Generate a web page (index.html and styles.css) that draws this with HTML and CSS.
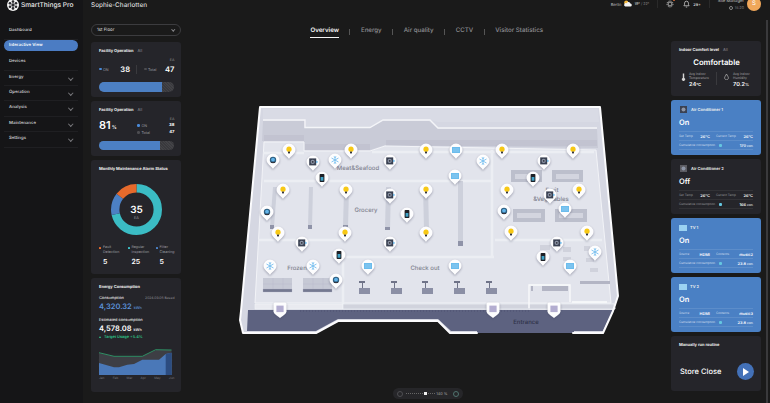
FILE: index.html
```html
<!DOCTYPE html>
<html lang="en">
<head>
<meta charset="utf-8">
<title>SmartThings Pro</title>
<link rel="stylesheet" href="styles.css">
</head>
<body>
<div class="app">
  <aside class="sidebar">
    <div class="brand">
      <span class="brand-logo"><svg viewBox="-6 -6 12 12" width="12" height="12"><g class="logo-mark"><circle r="1.7"/><circle cy="-3.4" r="1.3"/><circle cy="3.4" r="1.3"/><circle cx="-3" cy="-1.7" r="1.3"/><circle cx="3" cy="-1.7" r="1.3"/><circle cx="-3" cy="1.7" r="1.3"/><circle cx="3" cy="1.7" r="1.3"/></g></svg></span>
      <span class="brand-name">SmartThings Pro</span>
    </div>
    <nav class="nav">
      <a class="nav-item">Dashboard</a>
      <a class="nav-item active">Interactive View</a>
      <a class="nav-item">Devices</a>
      <a class="nav-item sub">Energy</a>
      <a class="nav-item sub">Operation</a>
      <a class="nav-item sub">Analysis</a>
      <a class="nav-item sub">Maintenance</a>
      <a class="nav-item sub">Settings</a>
    </nav>
  </aside>

  <div class="content">
    <header class="topbar">
      <h1 class="site">Sophie-Charlotten</h1>
      <div class="status">
        <span class="st-city">Berlin</span>
        <svg class="st-weather" viewBox="0 0 10 8" width="9" height="7"><circle class="sun" cx="3.6" cy="3" r="2.4"/><path class="cloud" d="M2.5 7.5h5.6a1.7 1.7 0 0 0 .2-3.4 2.3 2.3 0 0 0-4.3-.5 2 2 0 0 0-1.5 3.9z"/></svg>
        <span class="st-temp"><b>19°</b> / 22°</span>
        <i class="st-sep"></i>
        <span class="st-gear"><svg viewBox="0 0 9 9" width="8" height="8"><circle class="line-ico" cx="4.5" cy="4.5" r="2.2"/><circle class="line-ico dash" cx="4.5" cy="4.5" r="3.4"/></svg><i class="st-dot"></i></span>
        <svg class="st-bell" viewBox="0 0 8 9" width="7" height="8"><path class="line-ico" d="M1 6.5c.8-.8.8-1.6.8-3a2.2 2.2 0 0 1 4.4 0c0 1.4 0 2.2.8 3zM3.2 8h1.6"/></svg>
        <span class="st-count">29+</span>
        <i class="st-sep"></i>
        <div class="st-user">
          <span class="st-name">Site Manager</span>
          <span class="st-time"><svg viewBox="0 0 6 6" width="4" height="4"><circle class="line-ico" cx="3" cy="3" r="2.3"/></svg>15:20</span>
        </div>
        <span class="avatar">S</span>
      </div>
    </header>

    <div class="columns">
      <section class="col-left">
        <div class="select"><span>1st Floor</span><i class="chev"></i></div>

        <article class="card h55">
          <div class="card-title">Facility Operation <span class="dim">All</span></div>
          <div class="ea">EA</div>
          <div class="op-row">
            <div class="op-part first"><span class="legend"><i class="dot blue"></i>ON</span><b class="num">38</b></div>
            <div class="op-part second"><span class="legend"><i class="dot gray"></i>Total</span><b class="num">47</b></div>
          </div>
          <div class="bar tall"><span class="fill" style="width:83%"></span></div>
        </article>

        <article class="card h55">
          <div class="card-title">Facility Operation <span class="dim">All</span></div>
          <div class="pct-row">
            <div class="pct">81<small>%</small></div>
            <div class="pct-list">
              <div class="ea">EA</div>
              <div class="pct-line"><span class="legend"><i class="dot blue"></i>ON</span><b>38</b></div>
              <div class="pct-line"><span class="legend"><i class="dot gray"></i>Total</span><b>47</b></div>
            </div>
          </div>
          <div class="bar"><span class="fill" style="width:81%"></span></div>
        </article>

        <article class="card h114">
          <div class="card-title">Monthly Maintenance Alarm Status</div>
          <svg class="donut" viewBox="0 0 51 51" width="51" height="51">
            <g class="donut-ring">
              <circle class="seg teal" cx="25.5" cy="25.5" r="21.3" pathLength="35" stroke-dasharray="25 10"/>
              <circle class="seg blue" cx="25.5" cy="25.5" r="21.3" pathLength="35" stroke-dasharray="5 30" stroke-dashoffset="-25"/>
              <circle class="seg orange" cx="25.5" cy="25.5" r="21.3" pathLength="35" stroke-dasharray="5 30" stroke-dashoffset="-30"/>
            </g>
            <text class="donut-num" x="25.5" y="28.5">35</text>
            <text class="donut-unit" x="25.5" y="34.5">EA</text>
          </svg>
          <div class="alarm">
            <div class="alarm-item"><div class="alarm-label"><i class="sq orange"></i>Fault<br>Detection</div><b>5</b></div>
            <div class="alarm-item"><div class="alarm-label"><i class="sq teal"></i>Regular<br>Inspection</div><b>25</b></div>
            <div class="alarm-item"><div class="alarm-label"><i class="sq blue"></i>Filter<br>Cleaning</div><b>5</b></div>
          </div>
        </article>

        <article class="card h114">
          <div class="card-title">Energy Consumption</div>
          <div class="en-head"><span>Consumption</span><span class="dim">2024.09.06 Based</span></div>
          <div class="en-val blue-t">4,320.32 <small>kWh</small></div>
          <div class="en-head"><span>Estimated consumption</span></div>
          <div class="en-val">4,578.08 <small>kWh</small></div>
          <div class="en-target"><span class="tri"></span>Target Usage +5.4%</div>
          <svg class="chart" viewBox="99 349 75 28" width="75" height="28">
            <path class="ch-grid" d="M99 355h75M99 361h75M99 367h75M99 373h75"/>
            <path class="ch-gray" d="M100 354 115 357.5H143L157 351H172.5V376H100z"/>
            <path class="ch-blue" d="M100 364 115 368.3H120L128.3 365.7 135 365 143.3 360.7H160L166.7 355 172.5 353.7V376H100z"/>
            <path class="ch-hatch" d="M166.7 355 172.5 353.7V376H166.7z"/>
            <path class="ch-green" d="M100 353.7 115 357.3H143.3L156.7 350.7 172.5 351"/>
          </svg>
          <div class="months"><span>Jan</span><span>Feb</span><span>Mar</span><span>Apr</span><span>May</span><span>Jun</span></div>
        </article>
      </section>

      <section class="col-center">
        <nav class="tabs">
          <a class="tab current">Overview</a><i class="tab-sep"></i>
          <a class="tab">Energy</a><i class="tab-sep"></i>
          <a class="tab">Air quality</a><i class="tab-sep"></i>
          <a class="tab">CCTV</a><i class="tab-sep"></i>
          <a class="tab">Visitor Statistics</a>
        </nav>

        <svg class="map" viewBox="181 95 490 245" width="490" height="245">
          <defs>
            <path id="pin" d="M-6.5 0A6.5 6.5 0 1 1 6.5 0C6.5 3.6 2 5.8 0 9-2 5.8-6.5 3.6-6.5 0Z"/>
            <g id="p-bulb"><use href="#pin" class="pin"/><circle class="i-yellow" cy="-.8" r="2.6"/><rect class="i-dark" x="-1" y="1.6" width="2" height="1.8"/></g>
            <g id="p-ac"><use href="#pin" class="pin"/><rect class="i-slate" x="-3.8" y="-3.6" width="7" height="7"/><circle class="i-gray" cx="-.3" cy="-.1" r="2.1"/><rect class="i-dark" x="-1.1" y="-.9" width="1.6" height="1.6"/><path class="i-sky" d="M3.2-1.5 5.2-.1 3.2 1.3z"/></g>
            <g id="p-snow"><use href="#pin" class="pin"/><path class="i-flake" d="M0-4V4M-3.5-2 3.5 2M-3.5 2 3.5-2M-1-3.3 0-2.3 1-3.3M-1 3.3 0 2.3 1 3.3"/></g>
            <g id="p-phone"><use href="#pin" class="pin"/><rect class="i-black" x="-2.4" y="-4" width="4.8" height="8" rx=".8"/><rect class="i-teal" x="-1.4" y="-1" width="2.8" height="3.7"/></g>
            <g id="p-cam"><use href="#pin" class="pin"/><circle class="i-deep" r="3.2"/><circle class="i-sky" cy="-.4" r="1.9"/><rect class="i-dark" x="-2" y="2" width="4" height="1"/></g>
            <g id="p-tv"><use href="#pin" class="pin"/><rect class="i-sky2" x="-4" y="-3" width="8" height="6"/><path class="i-tvl" d="M-3-1H3M-3 1H3"/></g>
            <g id="p-door"><path class="pin" d="M-6.5-5Q-6.5-6.5-5-6.5H5Q6.5-6.5 6.5-5V2.5Q6.5 4 4 6L0 9-4 6Q-6.5 4-6.5 2.5Z"/><rect class="i-lav" x="-3.6" y="-3.4" width="7.2" height="6.5"/></g>
          </defs>

          <polygon class="m-shell" points="260,107 600,107 618,296 613,311 603,333 573,333 477,333 450,333 438,321 338,321 316,333 243,333 240,320 241,311"/>
          <polygon class="m-back" points="263,109 598,109 599,122 438,122 430,120 383,120 370,127 305,127 305,120 263,120"/>
          <polygon class="m-wall" points="263,121 304,121 304,128 370,128 383,121 429,121 438,129 597,129 598,148 385,145 370,150 304,150 304,141 262,141"/>
          <path class="m-wline" d="M263 120H305V127.5H370L383 120H430L438 128H597"/>
          <path class="m-stripe" d="M264 136H304M264 138H304M264 140H304M305 145H370M305 147H370M305 149H370M386 141H597M386 143H597M386 145H597"/>

          <polygon class="m-floor" points="264,142 304,142 304,151 370,151 385,146 596,150 611,303 255,303"/>
          <path class="m-walk" d="M263 153H304M372 152H594M264 181H492M492 150V257M345 257H494M343 257V305M258 240H343M495 240H602"/>
          <polygon class="m-sill light" points="255,304 343,304 343,309 255,309"/>
          <polygon class="m-sill" points="343,304 614,304 615,309 343,309"/>

          <g class="m-shelves">
            <polygon points="273,187 277,187 274,227 270,227"/><polygon points="309,187 313,187 312,227 308,227"/>
            <polygon points="344,190 349,190 348,227 343,227"/><polygon points="386,187 391,187 390,229 385,229"/>
            <polygon points="423,187 428,187 429,229 424,229"/><polygon points="458,181 463,181 463,246 458,246"/>
          </g>
          <path class="m-foot" d="M270 225h4v4h-4zM308 225h4v4h-4zM343 225h5v4h-5zM385 227h5v3h-5zM424 227h5v3h-5zM458 241h5v5h-5z"/>

          <g class="m-fridge">
            <rect x="511" y="170" width="31" height="12"/><rect x="552" y="170" width="31" height="12"/>
            <rect x="513" y="209" width="32" height="13"/><rect x="555" y="209" width="32" height="13"/>
          </g>
          <path class="m-fridge-in" d="M515 174h23v5h-23zM556 174h23v5h-23zM517 213h24v5h-24zM559 213h24v5h-24z"/>

          <g class="m-freezer"><rect x="263" y="278" width="29" height="12"/><rect x="303" y="278" width="29" height="12"/></g>
          <path class="m-freezer-b" d="M263 289h29v3h-29zM303 289h29v3h-29zM273 278v11M283 278v11M313 278v11M323 278v11M263 284h29M303 284h29"/>

          <g class="m-check">
            <path d="M359 281h6v2h-2v5h-1v-5h-3zM391 281h6v2h-2v5h-1v-5h-3zM422 281h6v2h-2v5h-1v-5h-3zM454 281h6v2h-2v5h-1v-5h-3zM486 281h6v2h-2v5h-1v-5h-3z"/>
            <path d="M359 288h11v6h-11zM391 288h11v6h-11zM422 288h11v6h-11zM454 288h11v6h-11zM486 288h11v6h-11z"/>
          </g>
          <path class="m-small" d="M540 245h10v5h-10zM563 247h8v5h-8zM563 257h8v4h-8zM584 246h6v5h-6zM586 258h8v4h-8zM590 268h8v4h-8z"/>

          <polygon class="m-sill" points="529,304 614,304 615,309 529,309"/>
          <path class="m-entry" d="M529 308V285H570V302M572 302H607"/>
          <rect class="m-bar" x="542" y="286" width="26" height="5"/>
          <rect class="m-bar" x="580" y="281" width="30" height="3"/>
          <rect class="m-bar" x="531" y="286" width="2" height="5"/>

          <polygon class="m-band" points="248,310 613,310 603,331 574,331 574,333 477,333 477,331 451,331 438,319 338,319 316,331 247,331"/>
          <path class="m-dash" d="M300 311H530"/>
          <path class="m-edge" d="M573 333H603L613 311 618 296 600 107H260L241 311 240 320 243 333H316L338 321H438L450 333H477"/>

          <text class="m-label" x="358" y="170">Meat&amp;Seafood</text>
          <text class="m-label" x="366" y="212">Grocery</text>
          <text class="m-label" x="297" y="270">Frozen</text>
          <text class="m-label" x="425" y="270">Check out</text>
          <text class="m-label" x="552" y="192">Fruit</text>
          <text class="m-label" x="551" y="201">&amp;Vegetables</text>
          <text class="m-label dark" x="526" y="324">Entrance</text>

          <g class="pins">
            <use href="#p-bulb" x="289" y="150"/><use href="#p-cam" x="273" y="160"/><use href="#p-ac" x="313" y="162"/>
            <use href="#p-snow" x="335" y="160"/><use href="#p-bulb" x="351" y="150"/><use href="#p-ac" x="390" y="161"/>
            <use href="#p-bulb" x="426" y="150"/><use href="#p-phone" x="322" y="178"/><use href="#p-bulb" x="283" y="190"/>
            <use href="#p-bulb" x="346" y="190"/><use href="#p-ac" x="390" y="195"/><use href="#p-bulb" x="426" y="190"/>
            <use href="#p-cam" x="267" y="212"/><use href="#p-phone" x="407" y="214"/>
            <use href="#p-tv" x="456" y="150"/><use href="#p-snow" x="483" y="161"/><use href="#p-bulb" x="502" y="150"/>
            <use href="#p-bulb" x="573" y="150"/><use href="#p-tv" x="455" y="176"/><use href="#p-ac" x="544" y="161"/>
            <use href="#p-phone" x="533" y="178"/><use href="#p-bulb" x="507" y="190"/><use href="#p-ac" x="550" y="195"/>
            <use href="#p-bulb" x="579" y="190"/><use href="#p-cam" x="504" y="211"/><use href="#p-tv" x="565" y="209"/>
            <use href="#p-bulb" x="278" y="233"/><use href="#p-bulb" x="345" y="233"/><use href="#p-ac" x="302" y="243"/>
            <use href="#p-ac" x="390" y="243"/><use href="#p-bulb" x="426" y="233"/><use href="#p-phone" x="339" y="255"/>
            <use href="#p-snow" x="270" y="266"/><use href="#p-snow" x="313" y="266"/><use href="#p-tv" x="368" y="266"/>
            <use href="#p-cam" x="336" y="280"/><use href="#p-bulb" x="511" y="232"/><use href="#p-bulb" x="587" y="232"/>
            <use href="#p-ac" x="557" y="243"/><use href="#p-phone" x="543" y="257"/><use href="#p-snow" x="595" y="252"/>
            <use href="#p-tv" x="570" y="266"/><use href="#p-tv" x="455" y="266"/>
            <use href="#p-door" x="280" y="309"/><use href="#p-door" x="493" y="309"/><use href="#p-door" x="554" y="309"/>
          </g>
        </svg>

        <div class="zoom">
          <i class="zoom-btn"></i>
          <div class="zoom-track"><i class="zoom-knob"></i></div>
          <span class="zoom-val">140 %</span>
          <i class="zoom-btn on"></i>
        </div>
      </section>

      <section class="col-right">
        <article class="card h55">
          <div class="card-title">Indoor Comfort level <span class="dim">All</span></div>
          <div class="comfort">Comfortable</div>
          <div class="comfort-row">
            <div class="comfort-part">
              <svg viewBox="0 0 5 9" width="5" height="8"><path class="ico-fill" d="M1.7.5h1.6v5a1.8 1.8 0 1 1-1.6 0z"/></svg>
              <div><div class="c-label">Avg Indoor<br>Temperature</div><b class="c-val">24<small>℃</small></b></div>
            </div>
            <div class="comfort-part last">
              <svg viewBox="0 0 6 8" width="5" height="7"><path class="line-ico light" d="M3 1 5 4.5A2.3 2.3 0 1 1 1 4.5z"/></svg>
              <div><div class="c-label">Avg Indoor<br>Humidity</div><b class="c-val">70.2<small>%</small></b></div>
            </div>
          </div>
        </article>

        <article class="card h55 device on">
          <div class="dev-head"><svg class="dev-ico" viewBox="0 0 9 9" width="9" height="9"><rect class="i-slate" x="1" y="1" width="7" height="7"/><circle class="i-gray" cx="4.5" cy="4.5" r="2"/></svg><span>Air Conditioner 1</span></div>
          <div class="dev-state">On</div>
          <div class="dev-rows">
            <div class="dev-row"><span>Set Temp</span><b>26°C</b><span class="gap">Current Temp</span><b>26°C</b></div>
            <div class="dev-row"><span>Cumulative consumption</span><i class="leaf"></i><b class="push">170 <small>kWh</small></b></div>
          </div>
        </article>

        <article class="card h55 device">
          <div class="dev-head"><svg class="dev-ico" viewBox="0 0 9 9" width="9" height="9"><rect class="i-ac-off" x="1" y="1" width="7" height="7"/><circle class="i-gray" cx="4.5" cy="4.5" r="2"/></svg><span>Air Conditioner 2</span></div>
          <div class="dev-state">Off</div>
          <div class="dev-rows">
            <div class="dev-row"><span>Set Temp</span><b>26°C</b><span class="gap">Current Temp</span><b>26°C</b></div>
            <div class="dev-row"><span>Cumulative consumption</span><i class="leaf"></i><b class="push">166 <small>kWh</small></b></div>
          </div>
        </article>

        <article class="card h55 device on">
          <div class="dev-head"><i class="tv-ico"></i><span>TV 1</span></div>
          <div class="dev-state">On</div>
          <div class="dev-rows">
            <div class="dev-row"><span>Source</span><b>HDMI</b><span class="gap">Contents</span><b>music2</b></div>
            <div class="dev-row"><span>Cumulative consumption</span><i class="leaf"></i><b class="push">23.8 <small>kWh</small></b></div>
          </div>
        </article>

        <article class="card h55 device on">
          <div class="dev-head"><i class="tv-ico"></i><span>TV 2</span></div>
          <div class="dev-state">On</div>
          <div class="dev-rows">
            <div class="dev-row"><span>Source</span><b>HDMI</b><span class="gap">Contents</span><b>music3</b></div>
            <div class="dev-row"><span>Cumulative consumption</span><i class="leaf"></i><b class="push">23.8 <small>kWh</small></b></div>
          </div>
        </article>

        <article class="card h55">
          <div class="card-title">Manually run routine</div>
          <div class="routine">
            <span>Store Close</span>
            <button class="play" type="button" aria-label="Run"><i></i></button>
          </div>
        </article>
      </section>
    </div>
    <i class="scroll"></i>
  </div>
</div>
</body>
</html>
```

FILE: styles.css
```css
* { box-sizing: border-box; }
html, body { margin: 0; padding: 0; height: 100%; }
body {
  background: #1a1a1a;
  color: #fff;
  font-family: Inter, "Noto Sans", "Liberation Sans", sans-serif;
  text-rendering: geometricPrecision;
  overflow: hidden;
}
i { display: block; font-style: normal; }
a { display: block; }

.app { display: flex; width: 770px; height: 403px; overflow: hidden; }

/* sidebar */
.sidebar { flex: 0 0 83px; background: #151517; padding: 0 5px 0 4px; }
.brand { display: flex; align-items: center; height: 11px; margin: -1px -30px 0 3px; gap: 2px; }
.brand-logo { width: 12px; height: 12px; flex: none; border-radius: 50%; background: #f2f2f2; display: block; }
.brand-logo svg { display: block; }
.logo-mark circle { fill: #2a2a2e; }
.brand-name { font-size: 6.6px; font-weight: 500; white-space: nowrap; color: #e8e8e8; }
.nav { margin-top: 14.4px; }
.nav-item {
  position: relative; height: 15.4px; line-height: 14.4px; font-size: 4.3px; font-weight: 600;
  padding-left: 5px; color: #c9c9cc; border-bottom: 1px solid #1f1f22;
}
.nav-item.active {
  color: #fff; border-bottom: 0; height: 11.5px; margin: 0 0 3.9px; line-height: 11.5px;
  border-radius: 6px; background: #4b7cc3;
}
.nav-item.sub::after {
  content: ""; position: absolute; right: 6px; top: 5px; width: 2.5px; height: 2.5px;
  border-right: 1px solid #77777b; border-bottom: 1px solid #77777b; transform: rotate(45deg);
}

/* content */
.content { position: relative; flex: 1; min-width: 0; display: flex; flex-direction: column; }
.topbar { display: flex; justify-content: space-between; height: 24px; padding-left: 8px; }
.site { margin: 1px 0 0; font-size: 6.4px; line-height: 9px; font-weight: 500; color: #dedede; }
.status { display: flex; align-items: flex-start; height: 10px; padding-right: 9px; }
.st-city { margin-top: 1.5px; font-size: 4px; line-height: 5px; color: #bbb; }
.st-weather { margin: 0 2px 0 2px; }
.sun { fill: #f4b93f; }
.cloud { fill: #f3f3f3; }
.st-temp { margin-top: 1.5px; font-size: 3.6px; line-height: 5px; color: #888; white-space: nowrap; }
.st-temp b { color: #ccc; font-weight: 600; }
.st-sep { width: 1px; height: 8px; background: #2a2a2a; margin: 0 8px; }
.st-gear { position: relative; display: block; height: 8px; }
.st-gear svg { display: block; }
.st-dot { position: absolute; right: -1px; top: -1px; width: 2px; height: 2px; border-radius: 50%; background: #e2703a; }
.line-ico { fill: none; stroke: #ddd; stroke-width: .8; }
.line-ico.dash { stroke-dasharray: 1.3 1; }
.line-ico.light { stroke: #bbb; }
.st-bell { margin-left: 9px; }
.st-count { margin: 1.5px 0 0 3px; font-size: 3.9px; line-height: 5px; font-weight: 600; color: #ddd; }
.st-user { display: flex; flex-direction: column; align-items: flex-end; margin-top: -1px; margin-right: 3px; }
.st-name { font-size: 4.2px; line-height: 5px; color: #ccc; white-space: nowrap; }
.st-time { display: flex; align-items: center; gap: 2px; margin-top: 1.5px; font-size: 3.6px; line-height: 5px; color: #888; }
.st-time svg { display: block; }
.avatar {
  flex: none; width: 14px; height: 14px; margin-top: -3px; border-radius: 50%;
  background: #f0a75a; font-size: 6px; line-height: 14px; text-align: center; color: #fff;
}

.columns { display: flex; flex: 1; min-height: 0; padding: 0 9px 0 8px; }
.col-left { flex: 0 0 90px; display: flex; flex-direction: column; gap: 4px; }
.col-right { flex: 0 0 90px; display: flex; flex-direction: column; gap: 4px; padding-top: 17px; }
.col-center { flex: 1; min-width: 0; display: flex; flex-direction: column; align-items: center; }

.select {
  display: flex; align-items: center; justify-content: space-between; height: 12px; margin-bottom: 2px;
  padding: 0 6px 0 5px; border: 1px solid #3c3c3f; border-radius: 6px; font-size: 4.4px; color: #ddd;
}
.chev { width: 2.5px; height: 2.5px; border-right: 1px solid #8a8a8e; border-bottom: 1px solid #8a8a8e; transform: rotate(45deg); margin-top: -1px; }

.card { background: #25252a; border-radius: 3px; padding: 6px 7px 6px 8px; overflow: hidden; }
.h55 { height: 55px; flex: none; }
.h114 { height: 114px; flex: none; }
.card-title { font-size: 4px; line-height: 6px; font-weight: 700; color: #f0f0f0; white-space: nowrap; }
.dim { font-weight: 400; color: #8e8e92; margin-left: 3px; }

.ea { font-size: 3.6px; line-height: 5px; color: #8e8e92; text-align: right; }
.h55 > .ea { margin-top: 4px; }
.op-row { display: flex; height: 10px; align-items: center; margin-top: 1px; }
.op-part { display: flex; align-items: center; justify-content: space-between; }
.op-part.first { flex: 0 0 31px; }
.op-part.second { flex: 1; margin-left: 6px; padding-left: 7px; border-left: 1px solid #3a3a3e; height: 9px; }
.num { font-size: 7.6px; font-weight: 600; }
.legend { display: flex; align-items: center; font-size: 3.7px; color: #9b9ba0; gap: 1.5px; }
.dot { width: 2.5px; height: 2.5px; border-radius: 50%; }
.dot.blue { background: #4a8ad8; }
.dot.gray { background: #4c4c50; }

.bar { height: 9px; margin-top: 5px; border-radius: 5px; background: repeating-linear-gradient(45deg, #39393d 0 1px, #434347 1px 2px); overflow: hidden; }
.bar.tall { height: 10px; margin-top: 8px; }
.fill { display: block; height: 100%; background: #4c80c4; }

.pct-row { display: flex; justify-content: space-between; align-items: flex-end; height: 21px; margin-top: 2px; }
.pct { font-size: 11px; line-height: 14px; font-weight: 600; margin-bottom: 1px; }
.pct small { font-size: 5px; margin-left: 1px; font-weight: 500; }
.pct-list { width: 37px; }
.pct-line { display: flex; justify-content: space-between; align-items: center; height: 7px; }
.pct-line b { font-size: 4.2px; font-weight: 700; }

.donut { display: block; margin: 12px auto 0; }
.donut-ring { transform: rotate(-90deg); transform-origin: 25.5px 25.5px; }
.seg { fill: none; stroke-width: 8.4; }
.seg.teal { stroke: #3bbcc4; }
.seg.blue { stroke: #4c80c4; }
.seg.orange { stroke: #e56a2c; }
.donut-num { font-size: 10px; font-weight: 600; fill: #fff; text-anchor: middle; }
.donut-unit { font-size: 3.8px; fill: #9b9ba0; text-anchor: middle; }
.alarm { display: grid; grid-template-columns: 28.5px 28px 1fr; margin-top: 10px; }
.alarm-label { position: relative; padding-left: 4px; font-size: 3.6px; line-height: 5.2px; color: #9b9ba0; white-space: nowrap; }
.alarm-item b { display: block; padding-left: 4px; margin-top: 1.5px; font-size: 7px; line-height: 9px; font-weight: 600; }
.sq { position: absolute; left: 0; top: 1.5px; width: 2.4px; height: 2.4px; border-radius: .6px; }
.sq.orange { background: #e56a2c; }
.sq.teal { background: #3bbcc4; }
.sq.blue { background: #4c80c4; }

.en-head { display: flex; justify-content: space-between; margin-top: 5px; font-size: 3.9px; line-height: 6px; color: #e4e4e4; font-weight: 500; white-space: nowrap; }
.en-head .dim { margin: 0; font-size: 3.4px; }
.en-val { margin-top: 1px; font-size: 7.5px; line-height: 10px; height: 10px; font-weight: 600; white-space: nowrap; }
.en-val small { font-size: 3.8px; font-weight: 500; }
.blue-t { color: #5a90d8; }
.en-target { display: flex; align-items: center; gap: 3px; margin-top: 0; height: 5px; font-size: 3.9px; line-height: 5px; font-weight: 600; color: #2fc98a; }
.tri { width: 0; height: 0; border-left: 1px solid transparent; border-right: 1px solid transparent; border-bottom: 2px solid #2fc98a; }
.chart { display: block; margin: 9px 0 0 -1px; }
.ch-grid { stroke: #34343a; stroke-width: .4; fill: none; }
.ch-gray { fill: #3d3e44; }
.ch-blue { fill: #4a78b8; }
.ch-hatch { fill: #2c4c80; }
.ch-green { fill: none; stroke: #2f9a6a; stroke-width: .9; }
.months { display: flex; justify-content: space-between; margin-top: 0; font-size: 3.2px; line-height: 4px; color: #77777c; }

/* tabs */
.tabs { display: flex; align-items: flex-start; height: 14px; margin-top: 2px; margin-left: 1px; }
.tab { font-size: 6.2px; line-height: 10px; padding-bottom: 1px; font-weight: 500; color: #8f8f93; white-space: nowrap; height: 12px; }
.tab.current { color: #f5f5f5; font-weight: 600; border-bottom: 1px solid #f5f5f5; }
.tab-sep { width: 1px; height: 6px; margin: 3px 10.5px 0; background: #555; }

/* map */
.map { display: block; flex: none; margin-top: 55px; }
.m-shell { fill: #d5d7e2; }
.m-edge { fill: none; stroke: #fbfbfd; stroke-width: 2; stroke-linejoin: round; stroke-linecap: round; }
.m-back { fill: #d9dbe5; }
.m-wall { fill: #c9cbd7; }
.m-wline { fill: none; stroke: #f4f5f8; stroke-width: 1.3; }
.m-stripe { fill: none; stroke: #b4b6c4; stroke-width: .7; }
.m-floor { fill: #e2e4ec; stroke: #f2f3f7; stroke-width: 1; }
.m-walk { fill: none; stroke: #eceef3; stroke-width: 2.5; }
.m-sill { fill: #d1d3dd; stroke: #f4f5f8; stroke-width: .6; }
.m-sill.light { fill: #e9eaf0; }
.m-shelves polygon { fill: #cdd0db; }
.m-foot { fill: #8f93a8; }
.m-fridge rect { fill: #bcbfcc; }
.m-fridge-in { fill: #d3d5df; }
.m-freezer rect { fill: #c6c9d5; }
.m-freezer-b { fill: #747990; stroke: #b2b5c4; stroke-width: .3; }
.m-check path:first-child { fill: #6f7388; }
.m-check path:last-child { fill: #8b8fa5; }
.m-small { fill: #d0d2dc; }
.m-entry { fill: none; stroke: #fafbfc; stroke-width: 1.3; }
.m-bar { fill: #b3b5c4; }
.m-band { fill: #5d6280; }
.m-dash { stroke: #3d4060; stroke-width: .5; stroke-dasharray: 1 2; fill: none; }
.m-label { font-size: 6px; font-weight: 500; fill: #81838f; text-anchor: middle; }
.m-label.dark { fill: #2f3248; }
.pin { fill: #fdfdfe; }
.pins { filter: drop-shadow(0 1px 1px rgba(70, 74, 100, .45)); }
.i-yellow { fill: #f7c815; }
.i-dark { fill: #33353f; }
.i-slate { fill: #3a4152; }
.i-gray { fill: #8d95a6; }
.i-sky { fill: #62b4ea; }
.i-sky2 { fill: #6cbcec; }
.i-tvl { stroke: #a8dafa; stroke-width: .5; fill: none; }
.i-flake { fill: none; stroke: #67b8ee; stroke-width: .8; }
.i-black { fill: #1e2026; }
.i-teal { fill: #3fa3c8; }
.i-deep { fill: #2f5f80; }
.i-lav { fill: #b3add0; }
.i-ac-off { fill: #5c5c62; }

/* zoom */
.zoom {
  flex: none; display: flex; align-items: center; width: 70px; height: 11px; margin: 48px 0 0 4px; padding: 0 4px;
  border-radius: 6px; background: #262629;
}
.zoom-btn { flex: none; width: 6px; height: 6px; border-radius: 50%; border: 1px solid #4e4e52; }
.zoom-btn.on { border-color: #4f736e; }
.zoom-track { position: relative; width: 29px; height: 1px; margin: 0 1px 0 3px; background: repeating-linear-gradient(90deg, #666 0 1px, transparent 1px 2px); }
.zoom-knob { position: absolute; left: 18px; top: -1px; width: 2.5px; height: 3px; background: #f0f0f0; }
.zoom-val { flex: 1; font-size: 3.8px; color: #aaa; white-space: nowrap; }

/* right */
.comfort { margin-top: 5px; font-size: 7.7px; line-height: 10px; font-weight: 600; text-align: center; }
.comfort-row { display: flex; margin-top: 4px; }
.comfort-part { flex: 1; display: flex; gap: 3px; padding-left: 2px; }
.comfort-part.last { border-left: 1px solid #3a3a3e; padding-left: 7px; height: 13px; flex: 0 0 38px; gap: 4px; }
.comfort-part svg { flex: none; margin-top: 1px; }
.ico-fill { fill: #d5d5d5; }
.c-label { font-size: 3.3px; line-height: 4.2px; color: #a5a5a9; white-space: nowrap; }
.c-val { display: block; margin-top: 1px; font-size: 5.6px; line-height: 7px; font-weight: 600; white-space: nowrap; }
.c-val small { font-size: 4px; }

.device { padding: 5px 8px; }
.device.on { background: #4a80c4; }
.dev-head { display: flex; align-items: center; gap: 3px; height: 9px; font-size: 4px; font-weight: 600; color: #f0f0f0; }
.dev-ico { display: block; flex: none; }
.tv-ico { flex: none; width: 8px; height: 6px; background: #9bd2f2; }
.dev-state { margin-top: 4px; font-size: 7.5px; line-height: 10px; font-weight: 600; }
.dev-rows { margin: 3px 0 0; border-top: 1px solid rgba(255, 255, 255, .1); }
.device:not(.on) .dev-rows { border-top-color: #323236; }
.dev-row {
  display: flex; align-items: center; height: 9px; font-size: 3.1px; color: rgba(255, 255, 255, .72);
  border-bottom: 1px solid rgba(255, 255, 255, .1); white-space: nowrap;
}
.device:not(.on) .dev-row { border-bottom-color: #323236; color: #98989c; }
.dev-row b { margin-left: auto; font-size: 3.9px; font-weight: 600; color: #fff; }
.dev-row .gap { margin-left: 6px; }
.dev-row small { font-size: 2.8px; font-weight: 400; }
.leaf { width: 2.5px; height: 3px; margin-left: 4px; background: #64c6e0; border-radius: 1px; }
.routine { display: flex; align-items: center; justify-content: space-between; margin-top: 15px; padding-left: 1px; font-size: 7.5px; font-weight: 500; }
.play { width: 17px; height: 17px; padding: 0; border: 0; border-radius: 50%; background: #4371b8; display: flex; align-items: center; justify-content: center; }
.play i { width: 0; height: 0; margin-left: 1px; border-left: 6px solid #fff; border-top: 4px solid transparent; border-bottom: 4px solid transparent; }

.scroll { position: absolute; right: 2px; top: 20px; bottom: 0; width: 2px; background: #3a3a3c; }
```
